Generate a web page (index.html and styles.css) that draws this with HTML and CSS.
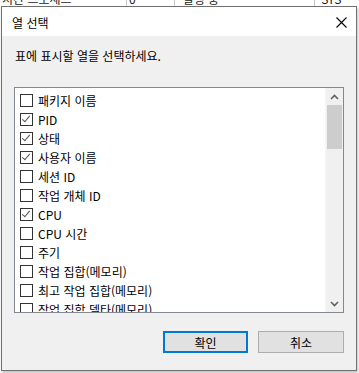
FILE: index.html
```html
<!DOCTYPE html>
<html lang="ko">
<head>
  <meta charset="UTF-8">
  <title>열 선택</title>
  <link rel="stylesheet" href="styles.css">
</head>
<body>
  <!-- Table behind the dialog -->
  <div class="behind">
    <div class="behind-row">
      <span class="cell c1">시간 프로세스</span>
      <span class="cell c2">0</span>
      <span class="cell c3">실행 중</span>
      <span class="cell c4">SYS</span>
    </div>
  </div>

  <!-- Dialog -->
  <div class="dialog">
    <div class="titlebar">
      <span class="title">열 선택</span>
      <svg class="close" width="11" height="11" viewBox="0 0 11 11">
        <path d="M0.5 0.5 L10.5 10.5 M10.5 0.5 L0.5 10.5" stroke="#000" stroke-width="1.1" fill="none"/>
      </svg>
    </div>
    <div class="content">
      <p class="prompt">표에 표시할 열을 선택하세요.</p>

      <div class="listbox">
        <div class="items">
          <label class="item"><span class="box"></span>패키지 이름</label>
          <label class="item"><span class="box checked"></span>PID</label>
          <label class="item"><span class="box checked"></span>상태</label>
          <label class="item"><span class="box checked"></span>사용자 이름</label>
          <label class="item"><span class="box"></span>세션 ID</label>
          <label class="item"><span class="box"></span>작업 개체 ID</label>
          <label class="item"><span class="box checked"></span>CPU</label>
          <label class="item"><span class="box"></span>CPU 시간</label>
          <label class="item"><span class="box"></span>주기</label>
          <label class="item"><span class="box"></span>작업 집합(메모리)</label>
          <label class="item"><span class="box"></span>최고 작업 집합(메모리)</label>
          <label class="item"><span class="box"></span>작업 집합 델타(메모리)</label>
        </div>
        <div class="scrollbar">
          <svg class="arrow" width="9" height="6" viewBox="0 0 9 6">
            <path d="M1 5 L4.5 1.5 L8 5" stroke="#606060" stroke-width="1.6" fill="none"/>
          </svg>
          <div class="thumb"></div>
          <div class="track"></div>
          <svg class="arrow" width="9" height="6" viewBox="0 0 9 6">
            <path d="M1 1 L4.5 4.5 L8 1" stroke="#606060" stroke-width="1.6" fill="none"/>
          </svg>
        </div>
      </div>

      <div class="buttons">
        <button class="btn primary">확인</button>
        <button class="btn">취소</button>
      </div>
    </div>
  </div>
</body>
</html>
```

FILE: styles.css
```css
body {
  margin: 0;
  width: 359px;
  height: 373px;
  overflow: hidden;
  background: #fff;
  font-family: "Noto Sans CJK KR", "Noto Sans", sans-serif;
  font-size: 12px;
  color: #000;
  position: relative;
}

.behind-row {
  display: flex;
  height: 16px;
  margin-top: -9px;
  line-height: 16px;
  color: #1a1a1a;
}
.cell {
  border-right: 1px solid #c8c8c8;
  padding-left: 2px;
  white-space: nowrap;
  overflow: hidden;
}
.c1 { width: 131px; }
.c2 { width: 47px; }
.c3 { width: 139px; padding-left: 8px; }
.c4 { width: 40px; padding-left: 6px; border-right: none; }

.dialog {
  position: absolute;
  left: 1px;
  top: 6px;
  width: 354px;
  height: 363px;
  border: 1px solid #707070;
  background: #f0f0f0;
  box-shadow: 1px 2px 3px rgba(0, 0, 0, 0.25);
  display: flex;
  flex-direction: column;
}

.titlebar {
  height: 29px;
  background: #fff;
  display: flex;
  align-items: center;
  justify-content: space-between;
  padding: 0 9px 0 10px;
}
.title {
  font-size: 12px;
  padding-top: 1px;
}
.close {
  margin-top: 1px;
}

.content {
  flex: 1;
  padding: 12px 12px 0 12px;
  display: flex;
  flex-direction: column;
}

.prompt {
  margin: 0;
  line-height: 16px;
  padding-left: 1px;
}

.listbox {
  margin-top: 23px;
  height: 224px;
  border: 1px solid #828790;
  background: #fff;
  display: flex;
  overflow: hidden;
}

.items {
  flex: 1;
  padding: 3px 0 0 5px;
}
.item {
  display: flex;
  align-items: center;
  height: 19px;
  gap: 5px;
  white-space: nowrap;
}
.box {
  width: 11px;
  height: 11px;
  border: 1px solid #333;
  background: #fff;
  flex-shrink: 0;
  position: relative;
}
.box.checked::after {
  content: "";
  position: absolute;
  left: 3px;
  top: 0px;
  width: 3px;
  height: 7px;
  border-right: 1.4px solid #555;
  border-bottom: 1.4px solid #555;
  transform: rotate(40deg);
}

.scrollbar {
  width: 17px;
  background: #f0f0f0;
  border-left: 1px solid #f4f7fb;
  display: flex;
  flex-direction: column;
  align-items: center;
}
.arrow {
  margin: 6px 0 5px;
  flex-shrink: 0;
}
.thumb {
  width: 15px;
  height: 44px;
  background: #cdcdcd;
}
.track {
  flex: 1;
}

.buttons {
  margin-top: 18px;
  display: flex;
  justify-content: flex-end;
  gap: 10px;
}
.btn {
  width: 86px;
  height: 22px;
  background: #e1e1e1;
  border: 1px solid #adadad;
  font-family: "Noto Sans CJK KR", "Noto Sans", sans-serif;
  font-size: 12px;
  color: #000;
  padding: 0;
}
.btn.primary {
  width: 85px;
  border: 2px solid #0078d7;
}
```
